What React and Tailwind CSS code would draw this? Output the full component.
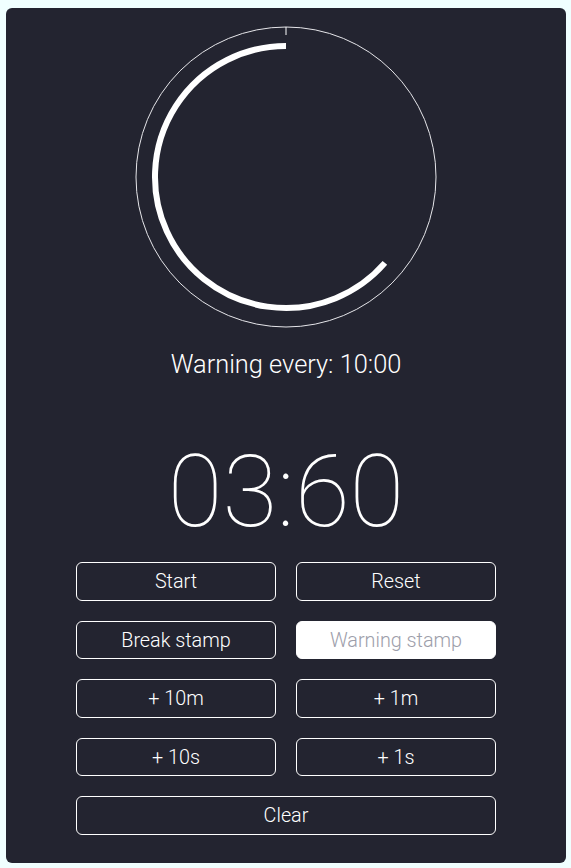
import React from "react";

function Btn({ children, active, full }) {
  return (
    <button
      className={
        (full ? "col-span-2 " : "") +
        (active
          ? "bg-white text-[#9d9eaa] border-white "
          : "bg-transparent text-white border-white ") +
        "h-[38.5px] pt-[2px] rounded-[6px] border text-[19.8px] font-light leading-none"
      }
      style={{ fontFamily: "Roboto, 'Liberation Sans', sans-serif" }}
    >
      {children}
    </button>
  );
}

export default function App() {
  return (
    <div
      className="w-[571px] h-[868px] bg-[#f0ffff] pt-[8px] pl-[6px]"
      style={{ fontFamily: "Roboto, 'Liberation Sans', sans-serif" }}
    >
      <div className="w-[560px] h-[855px] bg-[#232430] rounded-[6px] pt-[18px] flex flex-col items-center">
        <svg width="302" height="302" viewBox="0 0 302 302">
          <circle cx="151" cy="151" r="150" fill="none" stroke="#e6e6ea" strokeWidth="1" />
          <line x1="151" y1="1" x2="151" y2="9" stroke="#ffffff" strokeWidth="1" />
          <path
            d="M 151 20 A 131 131 0 1 0 249.9 236.9"
            fill="none"
            stroke="#ffffff"
            strokeWidth="6"
          />
        </svg>
        <div className="mt-[20px] h-[32px] leading-[32px] text-[25.4px] font-light text-white">
          Warning every: 10:00
        </div>
        <div className="mt-[62px] h-[100px] leading-[100px] text-[100px] font-thin text-white">
          03:60
        </div>
        <div className="mt-[20px] w-[420px] grid grid-cols-2 gap-x-[20px] gap-y-[20px]">
          <Btn>Start</Btn>
          <Btn>Reset</Btn>
          <Btn>Break stamp</Btn>
          <Btn active>Warning stamp</Btn>
          <Btn>+ 10m</Btn>
          <Btn>+ 1m</Btn>
          <Btn>+ 10s</Btn>
          <Btn>+ 1s</Btn>
          <Btn full>Clear</Btn>
        </div>
      </div>
    </div>
  );
}
